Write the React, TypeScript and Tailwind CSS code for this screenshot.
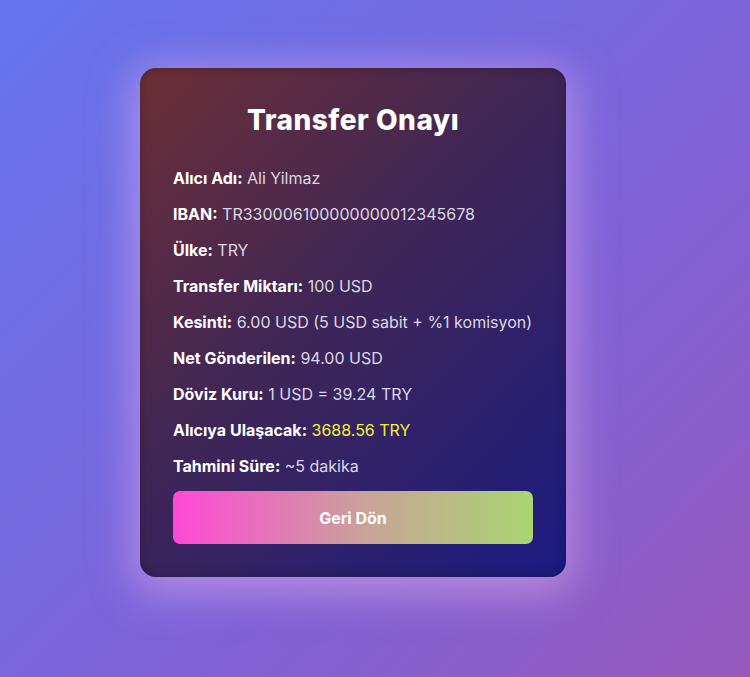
import React from "react";

const rows: { label: string; value: string; highlight?: boolean }[] = [
  { label: "Alıcı Adı:", value: "Ali Yilmaz" },
  { label: "IBAN:", value: "TR330006100000000012345678" },
  { label: "Ülke:", value: "TRY" },
  { label: "Transfer Miktarı:", value: "100 USD" },
  { label: "Kesinti:", value: "6.00 USD (5 USD sabit + %1 komisyon)" },
  { label: "Net Gönderilen:", value: "94.00 USD" },
  { label: "Döviz Kuru:", value: "1 USD = 39.24 TRY" },
  { label: "Alıcıya Ulaşacak:", value: "3688.56 TRY", highlight: true },
  { label: "Tahmini Süre:", value: "~5 dakika" },
];

export default function App() {
  return (
    <div
      className="w-[750px] h-[677px] overflow-hidden bg-[linear-gradient(135deg,#6575ee_0%,#7b65dc_50%,#975abf_100%)] flex justify-start items-start pl-[140px] pt-[68px]"
      style={{ fontFamily: "Inter, 'Noto Sans', sans-serif" }}
    >
      <div className="w-[426px] h-[509px] rounded-[16px] px-[33px] pt-[33px] pb-[33px] bg-[linear-gradient(135deg,#6e2f36_0%,#3f2656_45%,#1b1b82_100%)] shadow-[0_8px_40px_8px_rgba(230,180,240,0.5),inset_0_0_12px_rgba(0,0,0,0.25)] flex flex-col">
        <h1 className="text-white text-[28px] font-extrabold text-center leading-[38px] tracking-[0.5px]">
          Transfer Onayı
        </h1>
        <div className="mt-[28px] flex flex-col gap-[14px]">
          {rows.map((r) => (
            <div key={r.label} className="text-[16px] leading-[22px] whitespace-nowrap">
              <span className="font-bold text-white">{r.label}</span>{" "}
              <span className={r.highlight ? "text-[#f4f23a]" : "text-[#dcd8e4]"}>{r.value}</span>
            </div>
          ))}
        </div>
        <button className="mt-[14px] h-[53px] w-full rounded-[7px] bg-[linear-gradient(90deg,#ff48d8_0%,#c8a596_55%,#a9d571_100%)] text-white font-bold text-[16px]">
          Geri Dön
        </button>
      </div>
    </div>
  );
}
